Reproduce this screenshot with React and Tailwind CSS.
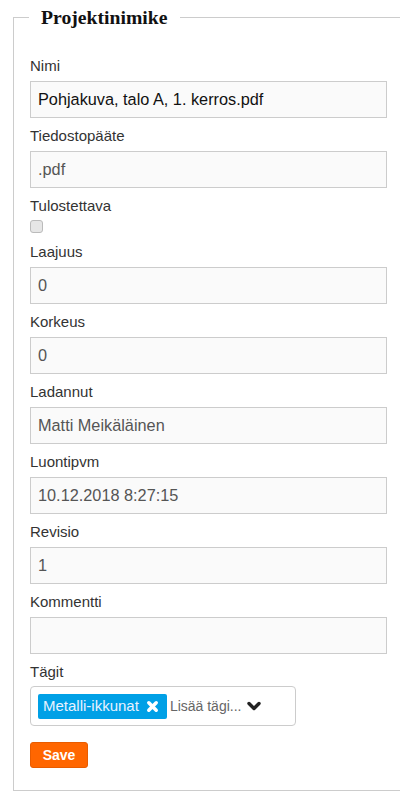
import React from "react";

const fields = [
  { label: "Tiedostopääte", value: ".pdf" },
];

function Field({ label, value, dark }) {
  return (
    <div className="mb-[8px]">
      <label className="block text-[15px] leading-5 text-[#333] mb-[5px]">{label}</label>
      <input
        type="text"
        defaultValue={value}
        readOnly={!dark}
        className={
          "block w-[357px] h-[37px] px-[7px] text-[16.3px] bg-[#fafafa] border border-[#ccc] outline-none " +
          (dark ? "text-[#111]" : "text-[#555]")
        }
      />
    </div>
  );
}

export default function App() {
  const rest = [
    { label: "Laajuus", value: "0" },
    { label: "Korkeus", value: "0" },
    { label: "Ladannut", value: "Matti Meikäläinen" },
    { label: "Luontipvm", value: "10.12.2018 8:27:15" },
    { label: "Revisio", value: "1" },
    { label: "Kommentti", value: "" },
  ];

  return (
    <div className="bg-white min-h-screen pt-[7px] font-['Liberation_Sans',Arial,sans-serif]">
      <fieldset className="ml-[13px] w-[387px] border-l border-t border-b border-r-0 border-[#ccc] pl-[16px] pt-[29px] pb-[22px] m-0">
        <legend className="-ml-[1px] px-[12px] font-['Liberation_Serif','Times_New_Roman',serif] font-bold text-[19.7px] leading-[20px] text-[#111]">
          Projektinimike
        </legend>

        <Field label="Nimi" value="Pohjakuva, talo A, 1. kerros.pdf" dark />
        {fields.map((f) => (
          <Field key={f.label} label={f.label} value={f.value} />
        ))}

        <div className="mb-[9px]">
          <label className="block text-[15px] leading-5 text-[#333]">Tulostettava</label>
          <div className="mt-[4px] w-[13px] h-[13px] rounded-[3px] border border-[#bbb] bg-[#e6e6e6]" />
        </div>

        {rest.map((f) => (
          <Field key={f.label} label={f.label} value={f.value} />
        ))}

        <div>
          <label className="block text-[15px] leading-5 text-[#333] mb-[4px]">Tägit</label>
          <div className="w-[266px] h-[40px] border border-[#ccc] rounded-[4px] flex items-center px-[7px]">
            <span className="flex items-center h-[25px] bg-[#00a0e6] text-[#e8f2ff] text-[15px] rounded-[2px] pl-[5px] pr-[8px]">
              Metalli-ikkunat
              <svg className="ml-[7px]" width="13" height="13" viewBox="0 0 14 14">
                <path d="M3 3 L11 11 M11 3 L3 11" stroke="#fff" strokeWidth="3.8" strokeLinecap="round" />
              </svg>
            </span>
            <span className="ml-[3px] text-[14px] text-[#666]">Lisää tägi...</span>
            <svg className="ml-[6px]" width="14" height="10" viewBox="0 0 14 10">
              <path d="M2 2.5 L7 7.5 L12 2.5" fill="none" stroke="#222" strokeWidth="3.4" strokeLinecap="round" strokeLinejoin="round" />
            </svg>
          </div>
        </div>

        <button className="mt-[16px] w-[58px] h-[26px] bg-[#ff6600] text-white font-bold text-[14px] rounded-[3px] border border-[#e85c00]">
          Save
        </button>
      </fieldset>
    </div>
  );
}
